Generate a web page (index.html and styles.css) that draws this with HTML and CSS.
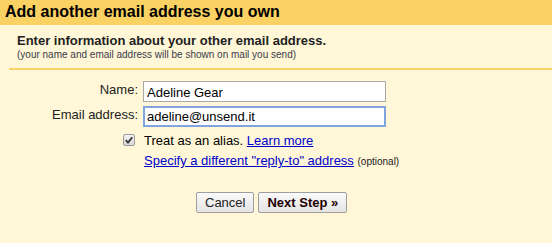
FILE: index.html
```html
<!DOCTYPE html>
<html>
<head>
<meta charset="utf-8">
<link rel="stylesheet" href="styles.css">
</head>
<body>
<div class="page">
  <div class="title">Add another email address you own</div>
  <div class="intro">
    <div class="intro-head">Enter information about your other email address.</div>
    <div class="intro-sub">(your name and email address will be shown on mail you send)</div>
  </div>
  <div class="rule"></div>
  <div class="form">
    <label class="lbl">Name:</label>
    <input class="field" type="text" value="Adeline Gear">
    <label class="lbl">Email address:</label>
    <input class="field focus" type="text" value="adeline@unsend.it">
    <div class="opt">
      <div class="alias">
        <span class="cb"><svg width="8" height="8" viewBox="0 0 8 8"><path d="M0.8 4.2 L3 6.6 L7.3 1.2" fill="none" stroke="#333" stroke-width="1.8"/></svg></span>
        <span>Treat as an alias. <a href="#">Learn more</a></span>
      </div>
      <div class="reply"><a href="#">Specify a different "reply-to" address</a> <span class="small">(optional)</span></div>
    </div>
  </div>
  <div class="buttons">
    <button class="btn">Cancel</button>
    <button class="btn bold">Next Step »</button>
  </div>
</div>
</body>
</html>
```
FILE: styles.css
```css
html, body { margin: 0; padding: 0; }
body {
  background: #fff7d7;
  font-family: "Liberation Sans", Arial, sans-serif;
  color: #000;
  width: 552px;
  height: 243px;
  overflow: hidden;
}
.title {
  background: #fad163;
  height: 25px;
  line-height: 24px;
  font-size: 16px;
  font-weight: bold;
  padding-left: 5px;
  color: #000;
}
.intro {
  padding: 8px 0 0 17px;
}
.intro-head {
  font-size: 13px;
  font-weight: bold;
  line-height: 16px;
  color: #222;
}
.intro-sub {
  font-size: 10px;
  line-height: 12px;
  color: #3a3a4a;
}
.rule {
  margin: 7px 0 0 9px;
  height: 2px;
  background: #fad163;
}
.form {
  display: grid;
  grid-template-columns: 138px 243px;
  column-gap: 5px;
  row-gap: 4px;
  margin-top: 11px;
  font-size: 13px;
  align-items: center;
}
.lbl {
  text-align: right;
  color: #222;
  align-self: start;
  padding-top: 1px;
}
.field {
  box-sizing: border-box;
  width: 243px;
  height: 21px;
  border: 1px solid #a8a8a8;
  background: #fff;
  font: 13px "Liberation Sans", Arial, sans-serif;
  color: #000;
  padding: 1px 3px 0;
  margin: 0;
  outline: none;
}
.field.focus {
  border: 2px solid #80a4e0;
  padding: 0 2px;
}
.opt {
  grid-column: 2;
  margin-left: -20px;
  margin-top: 0;
  white-space: nowrap;
}
.alias {
  display: flex;
  align-items: center;
  height: 18px;
}
.cb {
  box-sizing: border-box;
  width: 12px;
  height: 12px;
  border: 1px solid #9a9a9a;
  border-radius: 2px;
  background: linear-gradient(#f4f4f4, #d8d8d8);
  display: flex;
  align-items: center;
  justify-content: center;
  margin-right: 9px;
}
.reply {
  margin-left: 21px;
  margin-top: 4px;
}
a { color: #0000cc; text-decoration: underline; }
.small { font-size: 10px; color: #222; }
.buttons {
  display: flex;
  gap: 4px;
  margin: 24px 0 0 196px;
}
.btn {
  box-sizing: border-box;
  height: 21px;
  border: 1px solid #9e9e9e;
  border-radius: 2px;
  background: linear-gradient(#fafafa, #e4e4e4);
  font: 13px "Liberation Sans", Arial, sans-serif;
  color: #222;
  padding: 0 8px;
  margin: 0;
}
.btn.bold { font-weight: bold; color: #200; padding: 0 8px; }
```
